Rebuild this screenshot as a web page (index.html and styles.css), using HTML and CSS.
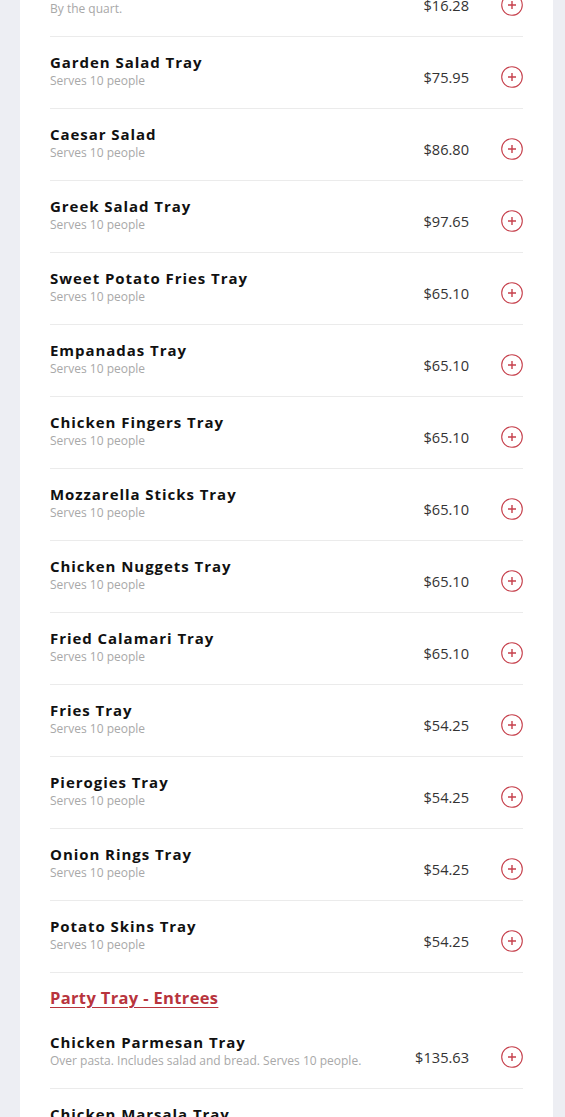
FILE: index.html
```html
<!DOCTYPE html>
<html>
<head>
<meta charset="utf-8">
<link rel="stylesheet" href="styles.css">
</head>
<body>
<div class="card">
  <div class="row">
    <div class="info"><div class="name">Coleslaw</div><div class="desc">By the quart.</div></div>
    <div class="side"><span class="price">$16.28</span><button class="add"><svg viewBox="0 0 22 22"><circle cx="11" cy="11" r="10.3"/><path d="M11 7v8M7 11h8"/></svg></button></div>
  </div>
  <div class="row">
    <div class="info"><div class="name">Garden Salad Tray</div><div class="desc">Serves 10 people</div></div>
    <div class="side"><span class="price">$75.95</span><button class="add"><svg viewBox="0 0 22 22"><circle cx="11" cy="11" r="10.3"/><path d="M11 7v8M7 11h8"/></svg></button></div>
  </div>
  <div class="row">
    <div class="info"><div class="name">Caesar Salad</div><div class="desc">Serves 10 people</div></div>
    <div class="side"><span class="price">$86.80</span><button class="add"><svg viewBox="0 0 22 22"><circle cx="11" cy="11" r="10.3"/><path d="M11 7v8M7 11h8"/></svg></button></div>
  </div>
  <div class="row">
    <div class="info"><div class="name">Greek Salad Tray</div><div class="desc">Serves 10 people</div></div>
    <div class="side"><span class="price">$97.65</span><button class="add"><svg viewBox="0 0 22 22"><circle cx="11" cy="11" r="10.3"/><path d="M11 7v8M7 11h8"/></svg></button></div>
  </div>
  <div class="row">
    <div class="info"><div class="name">Sweet Potato Fries Tray</div><div class="desc">Serves 10 people</div></div>
    <div class="side"><span class="price">$65.10</span><button class="add"><svg viewBox="0 0 22 22"><circle cx="11" cy="11" r="10.3"/><path d="M11 7v8M7 11h8"/></svg></button></div>
  </div>
  <div class="row">
    <div class="info"><div class="name">Empanadas Tray</div><div class="desc">Serves 10 people</div></div>
    <div class="side"><span class="price">$65.10</span><button class="add"><svg viewBox="0 0 22 22"><circle cx="11" cy="11" r="10.3"/><path d="M11 7v8M7 11h8"/></svg></button></div>
  </div>
  <div class="row">
    <div class="info"><div class="name">Chicken Fingers Tray</div><div class="desc">Serves 10 people</div></div>
    <div class="side"><span class="price">$65.10</span><button class="add"><svg viewBox="0 0 22 22"><circle cx="11" cy="11" r="10.3"/><path d="M11 7v8M7 11h8"/></svg></button></div>
  </div>
  <div class="row">
    <div class="info"><div class="name">Mozzarella Sticks Tray</div><div class="desc">Serves 10 people</div></div>
    <div class="side"><span class="price">$65.10</span><button class="add"><svg viewBox="0 0 22 22"><circle cx="11" cy="11" r="10.3"/><path d="M11 7v8M7 11h8"/></svg></button></div>
  </div>
  <div class="row">
    <div class="info"><div class="name">Chicken Nuggets Tray</div><div class="desc">Serves 10 people</div></div>
    <div class="side"><span class="price">$65.10</span><button class="add"><svg viewBox="0 0 22 22"><circle cx="11" cy="11" r="10.3"/><path d="M11 7v8M7 11h8"/></svg></button></div>
  </div>
  <div class="row">
    <div class="info"><div class="name">Fried Calamari Tray</div><div class="desc">Serves 10 people</div></div>
    <div class="side"><span class="price">$65.10</span><button class="add"><svg viewBox="0 0 22 22"><circle cx="11" cy="11" r="10.3"/><path d="M11 7v8M7 11h8"/></svg></button></div>
  </div>
  <div class="row">
    <div class="info"><div class="name">Fries Tray</div><div class="desc">Serves 10 people</div></div>
    <div class="side"><span class="price">$54.25</span><button class="add"><svg viewBox="0 0 22 22"><circle cx="11" cy="11" r="10.3"/><path d="M11 7v8M7 11h8"/></svg></button></div>
  </div>
  <div class="row">
    <div class="info"><div class="name">Pierogies Tray</div><div class="desc">Serves 10 people</div></div>
    <div class="side"><span class="price">$54.25</span><button class="add"><svg viewBox="0 0 22 22"><circle cx="11" cy="11" r="10.3"/><path d="M11 7v8M7 11h8"/></svg></button></div>
  </div>
  <div class="row">
    <div class="info"><div class="name">Onion Rings Tray</div><div class="desc">Serves 10 people</div></div>
    <div class="side"><span class="price">$54.25</span><button class="add"><svg viewBox="0 0 22 22"><circle cx="11" cy="11" r="10.3"/><path d="M11 7v8M7 11h8"/></svg></button></div>
  </div>
  <div class="row">
    <div class="info"><div class="name">Potato Skins Tray</div><div class="desc">Serves 10 people</div></div>
    <div class="side"><span class="price">$54.25</span><button class="add"><svg viewBox="0 0 22 22"><circle cx="11" cy="11" r="10.3"/><path d="M11 7v8M7 11h8"/></svg></button></div>
  </div>
  <h2 class="section">Party Tray - Entrees</h2>
  <div class="row">
    <div class="info"><div class="name">Chicken Parmesan Tray</div><div class="desc">Over pasta. Includes salad and bread. Serves 10 people.</div></div>
    <div class="side"><span class="price">$135.63</span><button class="add"><svg viewBox="0 0 22 22"><circle cx="11" cy="11" r="10.3"/><path d="M11 7v8M7 11h8"/></svg></button></div>
  </div>
  <div class="row">
    <div class="info"><div class="name">Chicken Marsala Tray</div><div class="desc">Over pasta. Includes salad and bread. Serves 10 people.</div></div>
    <div class="side"><span class="price">$135.63</span><button class="add"><svg viewBox="0 0 22 22"><circle cx="11" cy="11" r="10.3"/><path d="M11 7v8M7 11h8"/></svg></button></div>
  </div>
</div>
</body>
</html>
```

FILE: styles.css
```css
html, body {
  margin: 0;
  padding: 0;
  background: #edeef3;
  font-family: "Open Sans", "Liberation Sans", sans-serif;
  overflow: hidden;
}

.card {
  width: 533px;
  margin: -35px 0 0 20px;
  background: #fff;
  padding: 0 30px 0 30px;
  box-sizing: border-box;
}

.row {
  display: flex;
  justify-content: space-between;
  align-items: flex-start;
  height: 72px;
  box-sizing: border-box;
  padding-top: 16px;
  border-bottom: 1px solid #ebebeb;
}

.info {
  display: flex;
  flex-direction: column;
}

.name {
  font-size: 15px;
  font-weight: 700;
  letter-spacing: 0.95px;
  color: #111;
  line-height: 19px;
}

.desc {
  font-size: 12px;
  font-weight: 400;
  color: #a8a8a8;
  line-height: 17px;
}

.side {
  display: flex;
  align-items: center;
  gap: 32px;
  margin-top: 13px;
}

.price {
  font-size: 14.6px;
  color: #333;
  line-height: 22px;
}

.add {
  width: 22px;
  height: 22px;
  padding: 0;
  border: 0;
  background: none;
  display: block;
}

.add svg {
  width: 22px;
  height: 22px;
  display: block;
  fill: none;
  stroke: #c6404c;
}

.add circle {
  stroke-width: 1.1;
}

.add path {
  stroke-width: 1.4;
}

.section {
  margin: 0;
  padding: 15px 0 9px;
  font-size: 16.5px;
  line-height: 20px;
  font-weight: 700;
  letter-spacing: 0.35px;
  color: #b8343d;
  text-decoration: underline;
  text-underline-offset: 3px;
}
```
